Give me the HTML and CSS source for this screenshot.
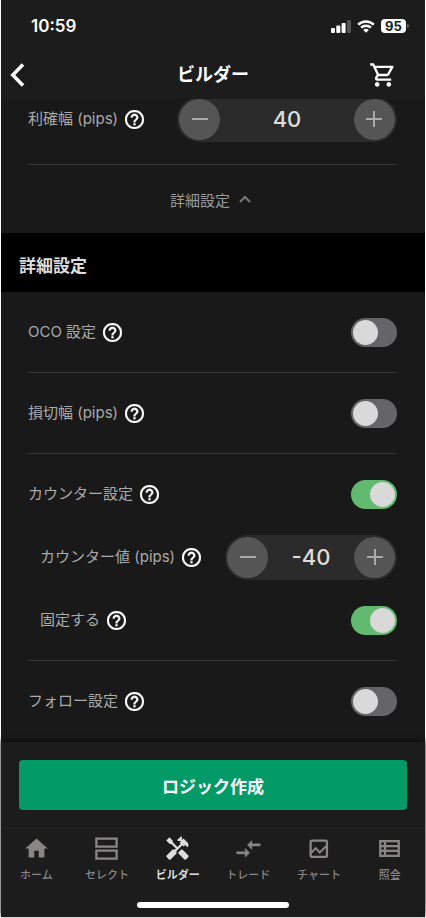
FILE: index.html
```html
<!DOCTYPE html>
<html lang="ja">
<head>
<meta charset="utf-8">
<meta name="viewport" content="width=device-width, initial-scale=1">
<title>ビルダー</title>
<link rel="stylesheet" href="styles.css">
</head>
<body>
<svg class="defs" aria-hidden="true">
  <symbol id="help" viewBox="2 2 20 20"><path d="M11 18h2v-2h-2v2zm1-16C6.480 2 2 6.480 2 12s4.480 10 10 10 10-4.480 10-10S17.520 2 12 2zm0 18c-4.410 0-8-3.590-8-8s3.590-8 8-8 8 3.590 8 8-3.590 8-8 8zm0-14c-2.210 0-4 1.790-4 4h2c0-1.100.9-2 2-2s2 .9 2 2c0 2-3 1.750-3 5h2c0-2.250 3-2.500 3-5 0-2.210-1.790-4-4-4z" stroke="currentColor" stroke-width=".3"/></symbol>
  <symbol id="minus" viewBox="0 0 18 18"><path d="M1 9h16" fill="none" stroke="currentColor" stroke-width="2"/></symbol>
  <symbol id="plus" viewBox="0 0 18 18"><path d="M1 9h16M9 1v16" fill="none" stroke="currentColor" stroke-width="2"/></symbol>
</svg>
<div class="app">
  <div class="status">
    <span class="time">10:59</span>
    <div class="status-icons">
      <svg width="20" height="13" viewBox="0 0 20 13"><rect x="0" y="8" width="4" height="5" rx="1"/><rect x="5.300" y="5.500" width="4" height="7.500" rx="1"/><rect x="10.600" y="3" width="4" height="10" rx="1"/><rect x="16" y="0" width="4" height="13" rx="1" fill="#555"/></svg>
      <svg width="18" height="13" viewBox="0 0 18 13"><path d="M1.200 4.600a11.200 11.200 0 0 1 15.600 0M4.100 7.700a7 7 0 0 1 9.800 0" fill="none" stroke="currentColor" stroke-width="2.500"/><path d="M9 12.800 6.200 10a4 4 0 0 1 5.600 0z"/></svg>
      <span class="battery">95</span>
    </div>
  </div>
  <header class="header">
    <button class="icon-button" type="button" aria-label="戻る"><svg width="18" height="26" viewBox="0 0 18 26"><path d="M14 2.500 3.800 13 14 23.500" fill="none" stroke="currentColor" stroke-width="3.500"/></svg></button>
    <h1>ビルダー</h1>
    <button class="icon-button cart" type="button" aria-label="カート"><svg width="28" height="28" viewBox="0 0 24 24"><path d="M15.550 13c.75 0 1.410-.41 1.750-1.030l3.580-6.490A.996.996 0 0 0 20.010 4H5.210l-.94-2H1v2h2l3.600 7.590-1.350 2.440C4.520 15.370 5.480 17 7 17h12v-2H7l1.100-2h7.450zM6.160 6h12.150l-2.760 5H8.530L6.160 6zM7 18c-1.100 0-1.990.9-1.990 2S5.900 22 7 22s2-.9 2-2-.9-2-2-2zm10 0c-1.100 0-1.990.9-1.990 2s.89 2 1.990 2 2-.9 2-2-.9-2-2-2z"/></svg></button>
  </header>

  <main class="content">
    <section class="group first">
      <div class="row">
        <span class="name">利確幅 (pips)</span>
        <button class="help" type="button" aria-label="利確幅の説明"><svg><use href="#help"/></svg></button>
        <div class="stepper wide">
          <button type="button" aria-label="減らす"><svg><use href="#minus"/></svg></button>
          <output>40</output>
          <button type="button" aria-label="増やす"><svg><use href="#plus"/></svg></button>
        </div>
      </div>
    </section>
    <button class="disclosure" type="button" aria-expanded="true">詳細設定 <svg width="12" height="8" viewBox="0 0 12 8"><path d="m1 7 5-5 5 5" fill="none" stroke="currentColor" stroke-width="2"/></svg></button>
    <h2>詳細設定</h2>
    <section class="group">
      <div class="row">
        <label class="name" for="oco">OCO 設定</label>
        <button class="help" type="button" aria-label="OCO設定の説明"><svg><use href="#help"/></svg></button>
        <input class="switch" id="oco" type="checkbox" role="switch">
      </div>
    </section>
    <section class="group">
      <div class="row">
        <label class="name" for="stop">損切幅 (pips)</label>
        <button class="help" type="button" aria-label="損切幅の説明"><svg><use href="#help"/></svg></button>
        <input class="switch" id="stop" type="checkbox" role="switch">
      </div>
    </section>
    <section class="group">
      <div class="row">
        <label class="name" for="counter">カウンター設定</label>
        <button class="help" type="button" aria-label="カウンター設定の説明"><svg><use href="#help"/></svg></button>
        <input class="switch" id="counter" type="checkbox" role="switch" checked>
      </div>
      <div class="row sub">
        <span class="name">カウンター値 (pips)</span>
        <button class="help" type="button" aria-label="カウンター値の説明"><svg><use href="#help"/></svg></button>
        <div class="stepper">
          <button type="button" aria-label="減らす"><svg><use href="#minus"/></svg></button>
          <output>-40</output>
          <button type="button" aria-label="増やす"><svg><use href="#plus"/></svg></button>
        </div>
      </div>
      <div class="row sub">
        <label class="name" for="fixed">固定する</label>
        <button class="help" type="button" aria-label="固定するの説明"><svg><use href="#help"/></svg></button>
        <input class="switch" id="fixed" type="checkbox" role="switch" checked>
      </div>
    </section>
    <section class="group last">
      <div class="row">
        <label class="name" for="follow">フォロー設定</label>
        <button class="help" type="button" aria-label="フォロー設定の説明"><svg><use href="#help"/></svg></button>
        <input class="switch" id="follow" type="checkbox" role="switch">
      </div>
    </section>
  </main>

  <footer class="footer">
    <div class="action"><button class="primary" type="button">ロジック作成</button></div>
    <nav class="tabs">
      <a href="#home"><svg viewBox="0 0 24 24"><path d="M10 20v-6h4v6h5v-8h3L12 3 2 12h3v8z"/></svg>ホーム</a>
      <a href="#select"><svg viewBox="0 0 24 24"><path d="M3 3.200h18v7.200H3zM3 13.800h18V21H3z" fill="none" stroke="currentColor" stroke-width="2"/></svg>セレクト</a>
      <a href="#builder" class="active" aria-current="page"><svg viewBox="0 0 24 24"><path d="m21.670 18.170-5.300-5.300h-.99l-2.540 2.540v.99l5.300 5.300c.39.39 1.020.39 1.410 0l2.120-2.120c.39-.38.39-1.020 0-1.410z"/><path d="m17.340 10.190 1.410-1.410 2.120 2.120c1.170-1.170 1.170-3.070 0-4.240l-3.540-3.540-1.410 1.410V1.710L15.220 1l-3.540 3.540.71.71h2.830l-1.410 1.410 1.060 1.060-2.890 2.890-4.130-4.130V5.060L4.830 2.040 2 4.870 5.030 7.900h1.410l4.130 4.130-.85.85H7.600l-5.300 5.300c-.39.39-.39 1.020 0 1.410l2.120 2.120c.39.39 1.020.39 1.410 0l5.300-5.300v-2.120l5.150-5.150 1.060 1.050z"/></svg>ビルダー</a>
      <a href="#trade"><svg viewBox="0 0 24 24"><path d="M9.010 14.800H1.500v2h7.510v3L13 15.800l-3.990-4v3zm5.980-5v3L11 8.800l3.990-4v3h7.510v2z" stroke="currentColor" stroke-width=".4"/></svg>トレード</a>
      <a href="#chart"><svg viewBox="0 0 24 24"><rect x="5" y="5" width="14.500" height="14.500" rx="1" fill="none" stroke="currentColor" stroke-width="2"/><path d="m5 16.300 4.500-4.600 3.600 3.900 6.200-6.100" fill="none" stroke="currentColor" stroke-width="1.800"/></svg>チャート</a>
      <a href="#inquiry"><svg viewBox="0 0 24 24"><path d="M3.800 5.400h16.400v13.200H3.800zM3.800 9.800h16.400M3.800 14.200h16.400M8 5.400v13.200" fill="none" stroke="currentColor" stroke-width="2"/></svg>照会</a>
    </nav>
    <div class="home-indicator"></div>
  </footer>
</div>
</body>
</html>
```
FILE: styles.css
```css
* { box-sizing: border-box; }

body {
  margin: 0;
  background: #fff;
  font-family: Inter, "Noto Sans CJK JP", sans-serif;
  color: #fff;
}

button {
  margin: 0;
  padding: 0;
  border: 0;
  background: none;
  color: inherit;
  font: inherit;
}

svg { display: block; fill: currentColor; }

.defs { position: absolute; width: 0; height: 0; }

.app {
  display: flex;
  flex-direction: column;
  min-height: calc(100vh - 1px);
  margin: 0 1px 1px;
  background: #191919;
}

.status {
  display: flex;
  align-items: center;
  justify-content: space-between;
  height: 52px;
  padding: 0 16px 0 30px;
  background: #1c1c1c;
}

.time { font-size: 17px; font-weight: 600; }

.status-icons { display: flex; align-items: center; gap: 6px; }

.battery {
  position: relative;
  width: 25px;
  margin-right: 3px;
  border-radius: 4px;
  background: #fff;
  color: #1c1c1c;
  font-size: 13px;
  font-weight: 700;
  line-height: 14px;
  text-align: center;
}

.battery::after {
  content: "";
  position: absolute;
  top: 5px;
  left: 26px;
  width: 2px;
  height: 4px;
  border-radius: 0 2px 2px 0;
  background: #666;
}

.header {
  display: grid;
  grid-template-columns: 1fr auto 1fr;
  align-items: center;
  height: 47px;
  padding: 0 28px 1px 8px;
  background: #1c1c1c;
}

.header h1 {
  margin: 0 0 0 20px;
  font-size: 18px;
  font-weight: 700;
  line-height: 24px;
}

.icon-button { justify-self: start; }
.icon-button.cart { justify-self: end; }

.content { flex: 1; overflow: hidden; }

.group {
  display: flex;
  flex-direction: column;
  gap: 1px;
  margin: 0 28px 0 27px;
  padding: 9px 0;
  border-bottom: 1px solid #343434;
}

.group.first { margin-top: -25px; padding: 14px 0; }
.group.last { border-bottom: 0; }

.row { display: flex; align-items: center; height: 62px; }
.row.sub { padding-left: 12px; }

.name {
  color: #aaa;
  font-size: 15px;
  font-weight: 400;
  line-height: 20px;
  white-space: nowrap;
}

.help { margin-left: 7px; }
.help svg { width: 19px; height: 19px; }

.stepper {
  display: flex;
  align-items: center;
  justify-content: space-between;
  width: 172px;
  height: 45px;
  margin-left: auto;
  padding: 2px;
  border-radius: 23px;
  background: #2b2b2b;
}

.stepper.wide { width: 220px; }

.stepper button {
  display: grid;
  place-items: center;
  width: 41px;
  height: 41px;
  border-radius: 50%;
  background: #555;
  color: #aaa;
}

.stepper svg { width: 18px; height: 18px; }

.stepper output {
  color: #ddd;
  font-size: 22px;
  font-weight: 500;
  line-height: 28px;
}

.switch {
  appearance: none;
  display: flex;
  width: 46px;
  height: 29px;
  margin: 0 0 0 auto;
  padding: 2px;
  border-radius: 15px;
  background: #656567;
}

.switch::before {
  content: "";
  width: 25px;
  height: 25px;
  border-radius: 50%;
  background: #d9d9d9;
}

.switch:checked { justify-content: flex-end; background: #62b970; }

.disclosure {
  display: flex;
  align-items: center;
  justify-content: center;
  gap: 9px;
  width: 100%;
  height: 68px;
  padding-right: 5px;
  color: #999;
  font-size: 15px;
}

.disclosure svg { color: #777; }

h2 {
  height: 59px;
  margin: 0;
  padding: 21px 18px 0;
  background: #000;
  color: #ddd;
  font-size: 17px;
  font-weight: 700;
  line-height: 24px;
}

.footer {
  padding-bottom: 9px;
  background: #1c1c1c;
  box-shadow: 0 -2px 5px #0d0d0d;
}

.action { padding: 18px; }

.primary {
  width: 100%;
  height: 50px;
  border-radius: 4px;
  background: #029a67;
  font-size: 17px;
  font-weight: 700;
}

.tabs {
  display: grid;
  grid-template-columns: repeat(6, 1fr);
  height: 74px;
  padding-top: 6px;
  border-top: 1px solid #242424;
}

.tabs a {
  display: flex;
  flex-direction: column;
  align-items: center;
  gap: 5px;
  color: #8a8686;
  font-size: 11px;
  font-weight: 500;
  line-height: 16px;
  text-decoration: none;
  white-space: nowrap;
}

.tabs a.active { color: #ddd; font-weight: 700; }
.tabs svg { width: 27px; height: 27px; }

.home-indicator {
  width: 36%;
  height: 6px;
  margin: 0 auto;
  border-radius: 3px;
  background: #fff;
}
```
